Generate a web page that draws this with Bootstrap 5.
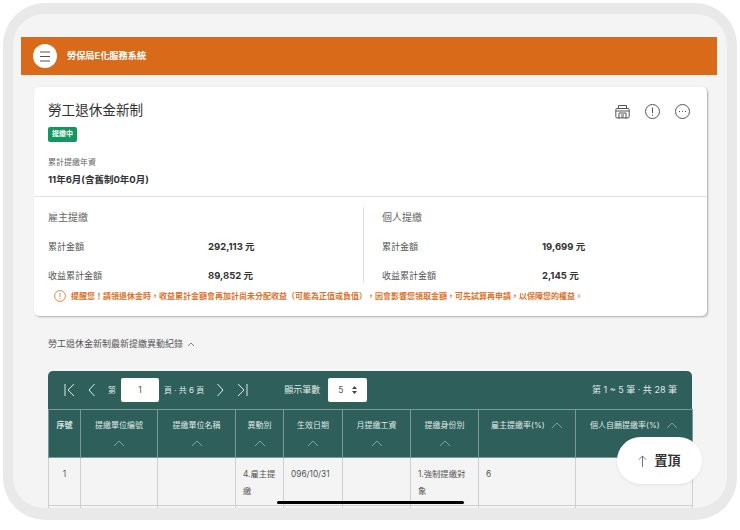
<!DOCTYPE html>
<html lang="zh-Hant">
  <head>
    <meta charset="utf-8" />
    <title>勞工退休金新制</title>
    <link href="https://cdn.jsdelivr.net/npm/bootstrap@5.3.3/dist/css/bootstrap.min.css" rel="stylesheet" />
    <style>
      body {
        background: #fff;
        overflow: hidden;
        font-family: Inter, "Noto Sans CJK TC", sans-serif;
        color: #333;
      }
      .tablet {
        width: 734px;
        height: 517px;
        margin: 3px;
        border: solid #e9e9e9;
        border-width: 11px 10px 12px 10px;
        border-radius: 42px;
        background: #f4f4f4;
        padding: 23px 10px 0 8px;
        overflow: hidden;
        position: relative;
      }
      .top-bar {
        height: 38px;
        background: #d96a1a;
        padding: 0 12px;
        gap: 10px;
        color: #fff;
        font-size: 9.2px;
        font-weight: 700;
        flex-wrap: nowrap;
        justify-content: flex-start;
      }
      .menu-btn {
        width: 24px;
        height: 24px;
        background: #fff;
        border-radius: 50%;
      }
      .info-card {
        margin: 12px 10px 0 13px;
        height: 229px;
        border: 0;
        border-radius: 5px;
        box-shadow: 1px 1px 2px rgba(0, 0, 0, 0.3);
      }
      .card-head {
        height: 110px;
        padding: 13px 17px 0 14px;
        border-bottom: 1px solid #e2e2e2;
      }
      .card-title-text {
        font-size: 13.6px;
        line-height: 20px;
        margin: 0;
        font-weight: 400;
      }
      .status-tag {
        width: 29px;
        height: 15px;
        margin-top: 7px;
        background: #14965f;
        color: #fff;
        border-radius: 2px;
        font-size: 7px;
        font-weight: 700;
      }
      .head-label {
        font-size: 8px;
        line-height: 12px;
        color: #666;
        margin-top: 14px;
      }
      .head-value {
        font-size: 9.5px;
        font-weight: 700;
        line-height: 14px;
        margin-top: 5px;
      }
      .head-icons {
        gap: 15px;
        padding-top: 4px;
        color: #555;
      }
      .split-col {
        width: 329px;
        height: 76px;
        margin-top: 10px;
        padding-left: 14px;
      }
      .split-col + .split-col {
        border-left: 1px solid #ddd;
        padding-left: 18px;
      }
      .split-title {
        font-size: 10px;
        line-height: 20px;
        color: #666;
      }
      .amount-row {
        font-size: 9px;
        line-height: 14px;
        color: #555;
        margin-top: 15px;
      }
      .split-title + .amount-row {
        margin-top: 13px;
      }
      .amount-label {
        width: 160px;
      }
      .amount-value {
        font-size: 9.5px;
        font-weight: 700;
        color: #333;
      }
      .warn-line {
        color: #d9722a;
        font-size: 8px;
        font-weight: 700;
        line-height: 12px;
        gap: 5px;
        margin: 7px 0 0 20px;
        white-space: nowrap;
      }
      .section-head {
        margin: 21px 0 0 27px;
        font-size: 9px;
        line-height: 14px;
        color: #555;
        gap: 4px;
      }
      .record-box {
        margin: 20px 25px 0 27px;
      }
      .pager {
        height: 38px;
        background: #2f5f5b;
        color: #dfe8e6;
        border-radius: 5px 5px 0 0;
        padding: 0 15px 0 16px;
        font-size: 8px;
        white-space: nowrap;
      }
      .pager-box {
        height: 24px;
        background: #fff;
        border-radius: 2px;
        color: #555;
        font-size: 8.5px;
      }
      .page-num {
        width: 38px;
        margin: 0 5px;
      }
      .pager-gap {
        margin-left: 13px;
      }
      .pager-size {
        margin-left: 36px;
        font-size: 9px;
      }
      .pager-total {
        margin-left: auto;
        font-size: 9px;
      }
      .size-pick {
        width: 39px;
        margin-left: 8px;
        gap: 9px;
      }
      .record-table {
        table-layout: fixed;
        width: 644px;
        margin: 0;
        font-size: 8px;
        --bs-table-bg: transparent;
      }
      .c1 { width: 32px; }
      .c2 { width: 77px; }
      .c3 { width: 78px; }
      .c4 { width: 48px; }
      .c5 { width: 59px; }
      .c6 { width: 68px; }
      .c7 { width: 68px; }
      .c8 { width: 97px; }
      .c9 { width: 117px; }
      .record-table th,
      .record-table td {
        border: 1px solid #cfcfcf;
        padding: 0;
        vertical-align: top;
        text-align: center;
      }
      .record-table thead th {
        height: 48px;
        background: #2f5f5b;
        color: #dfe8e6;
        border-color: #7b9a97;
        font-weight: 400;
        padding-top: 9px;
        line-height: 12px;
      }
      .record-table thead th.first-head {
        font-weight: 700;
      }
      .record-table thead svg.sort-under {
        display: block;
        margin: 9px auto 0;
      }
      .record-table tbody td {
        height: 48px;
        background: #f4f4f4;
        color: #555;
        font-size: 8.3px;
        line-height: 17px;
        padding: 8px 7px 0;
        text-align: left;
      }
      .record-table tbody td.num-cell {
        text-align: center;
      }
      .to-top {
        position: absolute;
        left: 604px;
        top: 423px;
        width: 85px;
        height: 47px;
        background: #fff;
        border-radius: 24px;
        gap: 7px;
        font-size: 13px;
        font-weight: 700;
        color: #333;
        box-shadow: 0 1px 3px rgba(0, 0, 0, 0.08);
      }
      .home-bar {
        position: absolute;
        left: 264px;
        top: 487px;
        width: 187px;
        height: 3px;
        background: #000;
        border-radius: 2px;
      }
    </style>
  </head>
  <body class="m-0">
    <div class="tablet">
      <nav class="navbar top-bar">
        <span class="menu-btn d-flex align-items-center justify-content-center">
          <svg width="12" height="11" viewBox="0 0 12 11" fill="none" stroke="#555" stroke-width="1"><path d="M1 1h10M1 5.5h10M1 10h10" /></svg>
        </span>
        <span>勞保局E化服務系統</span>
      </nav>

      <div class="card info-card">
        <div class="card-head d-flex justify-content-between">
          <div>
            <h1 class="card-title-text">勞工退休金新制</h1>
            <div class="status-tag d-flex align-items-center justify-content-center">提繳中</div>
            <div class="head-label">累計提繳年資</div>
            <div class="head-value">11年6月(含舊制0年0月)</div>
          </div>
          <div class="head-icons d-flex align-items-start">
            <svg width="15" height="16" viewBox="0 0 15 16" fill="none" stroke="#555" stroke-width="1">
              <path d="M3.5 4V1.5h8V4M2 4.5h11a1.2 1.2 0 0 1 1.2 1.2v7a1.2 1.2 0 0 1-1.2 1.2H2a1.2 1.2 0 0 1-1.2-1.2v-7A1.2 1.2 0 0 1 2 4.5zM4 14.8V9h7v5.8M1 7h13M6 11h3M6 13h3" />
            </svg>
            <svg width="15" height="15" viewBox="0 0 15 15" fill="none" stroke="#555" stroke-width="1">
              <circle cx="7.5" cy="7.5" r="7" /><path d="M7.5 3.5v5.5M7.5 10.5v1.2" />
            </svg>
            <svg width="15" height="15" viewBox="0 0 15 15" fill="none" stroke="#555" stroke-width="1">
              <circle cx="7.5" cy="7.5" r="7" /><path d="M4 7.5h1M7 7.5h1M10 7.5h1" />
            </svg>
          </div>
        </div>
        <div class="d-flex">
          <div class="split-col">
            <div class="split-title">雇主提繳</div>
            <div class="amount-row d-flex"><span class="amount-label">累計金額</span><span class="amount-value">292,113 元</span></div>
            <div class="amount-row d-flex"><span class="amount-label">收益累計金額</span><span class="amount-value">89,852 元</span></div>
          </div>
          <div class="split-col">
            <div class="split-title">個人提繳</div>
            <div class="amount-row d-flex"><span class="amount-label">累計金額</span><span class="amount-value">19,699 元</span></div>
            <div class="amount-row d-flex"><span class="amount-label">收益累計金額</span><span class="amount-value">2,145 元</span></div>
          </div>
        </div>
        <div class="warn-line d-flex align-items-center">
          <svg width="12" height="12" viewBox="0 0 12 12" fill="none" stroke="#e08a4a" stroke-width="1">
            <circle cx="6" cy="6" r="5.4" /><path d="M6 3v4M6 8.2v1" />
          </svg>
          <span>提醒您！請領退休金時，收益累計金額會再加計尚未分配收益（可能為正值或負值），因會影響您領取金額，可先試算再申請，以保障您的權益。</span>
        </div>
      </div>

      <div class="section-head d-flex align-items-center">
        <span>勞工退休金新制最新提繳異動紀錄</span>
        <svg width="8" height="5" viewBox="0 0 8 5" fill="none" stroke="#666" stroke-width="0.8"><path d="M1 4l3-3 3 3" /></svg>
      </div>

      <div class="record-box">
        <div class="pager d-flex align-items-center">
          <svg width="11" height="14" viewBox="0 0 11 14" fill="none" stroke="#dfe8e6" stroke-width="1"><path d="M1 1v12M10 1L4 7l6 6" /></svg>
          <svg class="pager-gap" width="7" height="14" viewBox="0 0 7 14" fill="none" stroke="#dfe8e6" stroke-width="1"><path d="M6.5 1L1 7l5.5 6" /></svg>
          <span class="pager-gap">第</span>
          <span class="pager-box page-num d-flex align-items-center justify-content-center">1</span>
          <span>頁 · 共 6 頁</span>
          <svg class="pager-gap" width="7" height="14" viewBox="0 0 7 14" fill="none" stroke="#dfe8e6" stroke-width="1"><path d="M.5 1L6 7l-5.5 6" /></svg>
          <svg class="pager-gap" width="11" height="14" viewBox="0 0 11 14" fill="none" stroke="#dfe8e6" stroke-width="1"><path d="M1 1l6 6-6 6M10 1v12" /></svg>
          <span class="pager-size">顯示筆數</span>
          <span class="pager-box size-pick d-flex align-items-center justify-content-center">5
            <svg width="5" height="8" viewBox="0 0 5 8" fill="#444"><path d="M2.5 0L5 3H0zM2.5 8L0 5h5z" /></svg>
          </span>
          <span class="pager-total">第 1 ~ 5 筆 · 共 28 筆</span>
        </div>
        <table class="table record-table">
          <thead>
            <tr>
              <th class="c1 first-head">序號</th>
              <th class="c2">提繳單位編號<svg class="sort-under" width="12" height="7" viewBox="0 0 12 7" fill="none" stroke="#9db5b2" stroke-width="0.8"><path d="M1 6l5-5 5 5" /></svg></th>
              <th class="c3">提繳單位名稱<svg class="sort-under" width="12" height="7" viewBox="0 0 12 7" fill="none" stroke="#9db5b2" stroke-width="0.8"><path d="M1 6l5-5 5 5" /></svg></th>
              <th class="c4">異動別<svg class="sort-under" width="12" height="7" viewBox="0 0 12 7" fill="none" stroke="#9db5b2" stroke-width="0.8"><path d="M1 6l5-5 5 5" /></svg></th>
              <th class="c5">生效日期<svg class="sort-under" width="12" height="7" viewBox="0 0 12 7" fill="none" stroke="#9db5b2" stroke-width="0.8"><path d="M1 6l5-5 5 5" /></svg></th>
              <th class="c6">月提繳工資<svg class="sort-under" width="12" height="7" viewBox="0 0 12 7" fill="none" stroke="#9db5b2" stroke-width="0.8"><path d="M1 6l5-5 5 5" /></svg></th>
              <th class="c7">提繳身份別<svg class="sort-under" width="12" height="7" viewBox="0 0 12 7" fill="none" stroke="#9db5b2" stroke-width="0.8"><path d="M1 6l5-5 5 5" /></svg></th>
              <th class="c8">雇主提繳率(%) <svg class="ms-1" width="12" height="7" viewBox="0 0 12 7" fill="none" stroke="#9db5b2" stroke-width="0.8"><path d="M1 6l5-5 5 5" /></svg></th>
              <th class="c9">個人自願提繳率(%) <svg class="ms-1" width="12" height="7" viewBox="0 0 12 7" fill="none" stroke="#9db5b2" stroke-width="0.8"><path d="M1 6l5-5 5 5" /></svg></th>
            </tr>
          </thead>
          <tbody>
            <tr>
              <td class="num-cell">1</td>
              <td></td>
              <td></td>
              <td>4.雇主提繳</td>
              <td>096/10/31</td>
              <td></td>
              <td>1.強制提繳對象</td>
              <td>6</td>
              <td></td>
            </tr>
            <tr>
              <td></td><td></td><td></td><td></td><td></td><td></td><td></td><td></td><td></td>
            </tr>
          </tbody>
        </table>
      </div>

      <div class="to-top d-flex align-items-center justify-content-center">
        <svg width="9" height="12" viewBox="0 0 9 12" fill="none" stroke="#666" stroke-width="0.9"><path d="M4.5 12V1M.8 4.7L4.5 1l3.7 3.7" /></svg>
        <span>置頂</span>
      </div>
      <div class="home-bar"></div>
    </div>
    <script src="https://cdn.jsdelivr.net/npm/bootstrap@5.3.3/dist/js/bootstrap.bundle.min.js"></script>
  </body>
</html>
